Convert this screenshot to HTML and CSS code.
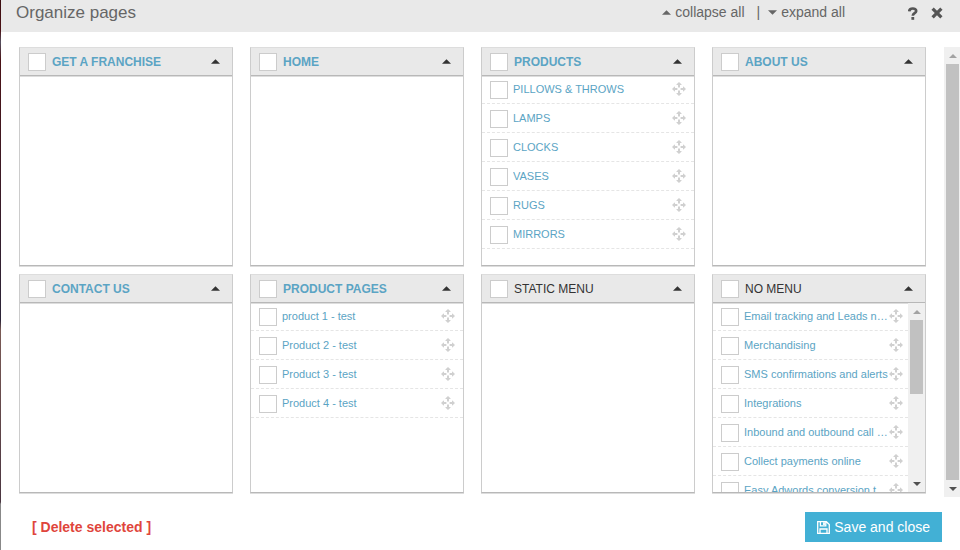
FILE: index.html
```html
<!DOCTYPE html>
<html lang="en">
<head>
  <meta charset="UTF-8">
  <title>Organize pages</title>
  <meta name="viewport" content="width=device-width, initial-scale=1.0">
  <link rel="stylesheet" href="styles.css">
</head>
<body>

  <!-- shared icons -->
  <svg class="sprite" aria-hidden="true">
    <symbol id="up" viewBox="0 0 10 5"><path d="M5 0 L10 5 H0 Z"/></symbol>
    <symbol id="down" viewBox="0 0 10 5"><path d="M0 0 H10 L5 5 Z"/></symbol>
    <symbol id="move" viewBox="0 0 14 14">
      <path d="M7 0 L9.6 2.6 V3 H8 V5.4 H6 V3 H4.4 V2.6 Z M7 14 L4.4 11.4 V11 H6 V8.6 H8 V11 H9.6 V11.4 Z M0 7 L2.6 4.4 H3 V6 H5.4 V8 H3 V9.6 H2.6 Z M14 7 L11.4 9.6 H11 V8 H8.6 V6 H11 V4.4 H11.4 Z"/>
    </symbol>
  </svg>

  <div class="modal">
    <header class="modal-header">
      <h1>Organize pages</h1>
      <div class="toggle-all">
        <button type="button" id="collapseAll"><svg class="caret"><use href="#up"/></svg>collapse all</button>
        <span class="divider">|</span>
        <button type="button" id="expandAll"><svg class="caret"><use href="#down"/></svg>expand all</button>
      </div>
      <div class="window-buttons">
        <button type="button" aria-label="Help">
          <svg width="10" height="13" viewBox="0 0 10 13"><path d="M1.2 4.4 C1.4 0.6 8.2 0.6 8.2 3.9 C8.2 6.3 4.8 6 4.8 8.8" fill="none" stroke="#555" stroke-width="2.7"/><rect x="3.4" y="10" width="2.8" height="2.8" fill="#555"/></svg>
        </button>
        <button type="button" aria-label="Close">
          <svg width="12" height="12" viewBox="0 0 12 12"><path d="M1.6 1.6 L10.4 10.4 M10.4 1.6 L1.6 10.4" stroke="#555" stroke-width="3.2"/></svg>
        </button>
      </div>
    </header>

    <main class="content">
      <div class="menus" id="menus"></div>
      <div class="scrollbar" aria-hidden="true">
        <svg class="arrow off"><use href="#up"/></svg>
        <div class="thumb"></div>
        <svg class="arrow"><use href="#down"/></svg>
      </div>
    </main>

    <footer class="modal-footer">
      <button type="button" class="delete">[ Delete selected ]</button>
      <button type="button" class="save">
        <svg width="13" height="13" viewBox="0 0 13 13" fill="none" stroke="#fff" stroke-width="1.3"><path d="M0.7 0.7 H9.4 L12.3 3.6 V12.3 H0.7 Z M3 12.3 V8 H10 V12.3 M3.4 0.7 V4.8 H8.8 V0.7"/><path d="M7 1.2 V4" stroke-width="1.8"/></svg>
        Save and close
      </button>
    </footer>
  </div>

  <script src="script.js"></script>
</body>
</html>
```
FILE: styles.css
```css
* {
  box-sizing: border-box;
}

body {
  margin: 0;
  font-family: "Liberation Sans", Arial, sans-serif;
  color: #666;
  background: linear-gradient(#3a0d10 0, #4a1014 30px, #55505f 42px, #4a1216 60px, #2b2438 320px, #7a5a55 330px, #4a3540 502px, #888 504px);
}

button {
  padding: 0;
  border: none;
  background: none;
  font: inherit;
  color: inherit;
  cursor: pointer;
}

svg {
  display: block;
  flex: none;
}

.sprite {
  position: absolute;
  width: 0;
  height: 0;
}

.modal {
  display: flex;
  flex-direction: column;
  height: 100vh;
  margin-left: 1px;
  background: #fff;
}

.modal-header {
  display: flex;
  align-items: flex-start;
  height: 32px;
  padding: 2px 17px 0 15px;
  background: #e9e9e9;
}

h1 {
  flex: 1;
  margin: 0;
  font-size: 17px;
  font-weight: normal;
  line-height: 21px;
}

.toggle-all {
  display: flex;
  gap: 12px;
  font-size: 14px;
  line-height: 21px;
}

.toggle-all button {
  display: flex;
  align-items: center;
  gap: 4px;
}

.caret {
  width: 9px;
  height: 5px;
  fill: currentColor;
}

.toggle-all .divider {
  margin-right: -4px;
}

.window-buttons {
  display: flex;
  align-items: center;
  gap: 13px;
  height: 22px;
  margin-left: 63px;
}

.content {
  display: flex;
  flex: 1;
  min-height: 0;
  margin-top: 15px;
}

.menus {
  display: grid;
  flex: 1;
  grid-template-columns: repeat(4, minmax(0, 1fr));
  gap: 8px 17px;
  align-content: start;
  padding: 0 18px;
  overflow: hidden;
}

.menu {
  border: 1px solid #ccc;
  border-top-color: #ddd;
  border-bottom-color: #b8b8b8;
  box-shadow: 0 1px #ddd;
}

.menu-header {
  display: flex;
  align-items: center;
  gap: 6px;
  height: 28px;
  padding: 0 12px 0 8px;
  background: #e9e9e9;
  border-bottom: 1px solid #b8b8b8;
  box-shadow: 0 1px #ddd;
  color: #333;
  font-size: 12px;
}

.menu-header .title {
  flex: 1;
}

a.title {
  color: #5ba4c4;
  font-weight: bold;
  text-decoration: none;
}

input[type="checkbox"] {
  appearance: none;
  flex: none;
  width: 18px;
  height: 18px;
  margin: 0;
  border: 1px solid #ccc;
  background: #fff;
}

input[type="checkbox"]:checked {
  background: #5ba4c4;
}

.menu-body {
  display: flex;
  height: 189px;
  overflow: hidden;
}

.menu.collapsed .menu-body {
  display: none;
}

.menu-body ul {
  flex: 1;
  min-width: 0;
  margin: 0;
  padding: 0;
  list-style: none;
}

.menu-body li {
  display: flex;
  align-items: flex-end;
  height: 29px;
  padding: 0 8px 4px;
  border-bottom: 1px dashed #e5e5e5;
}

.menu-body li:first-child {
  height: 28px;
}

.menu-body li a {
  flex: 1;
  margin-left: 5px;
  overflow: hidden;
  color: #5ba4c4;
  font-size: 11px;
  line-height: 20px;
  text-decoration: none;
  text-overflow: ellipsis;
  white-space: nowrap;
}

.menu-body.scroll li {
  padding-right: 5px;
}

.move {
  width: 14px;
  height: 14px;
  margin-bottom: 3px;
  fill: #d0d0d0;
}

.scrollbar {
  display: flex;
  flex: none;
  flex-direction: column;
  align-items: center;
  width: 17px;
  margin-right: -1px;
  background: #f0f0f0;
}

.menu-body .scrollbar {
  margin-right: 0;
}

.thumb {
  flex: 1;
  width: 13px;
  background: #c1c1c1;
}

.arrow {
  width: 8px;
  height: 4px;
  margin: 7px 0 6px;
  fill: #505050;
}

.arrow.off {
  fill: #a3a3a3;
}

.menu-body .thumb {
  flex: 0 0 39%;
  margin-bottom: auto;
}

.modal-footer {
  display: flex;
  align-items: center;
  justify-content: space-between;
  height: 53px;
  padding: 7px 18px 0 31px;
  font-size: 14px;
}

.delete {
  color: #e0453c;
  font-weight: bold;
}

.save {
  display: flex;
  align-items: center;
  gap: 4px;
  height: 30px;
  padding: 0 12px;
  background: #42b0d5;
  color: #fff;
}
```
FILE: script.js
```js
const menus = [
  { title: "GET A FRANCHISE", link: true, pages: [] },
  { title: "HOME", link: true, pages: [] },
  { title: "PRODUCTS", link: true, pages: ["PILLOWS & THROWS", "LAMPS", "CLOCKS", "VASES", "RUGS", "MIRRORS"] },
  { title: "ABOUT US", link: true, pages: [] },
  { title: "CONTACT US", link: true, pages: [] },
  { title: "PRODUCT PAGES", link: true, pages: ["product 1 - test", "Product 2 - test", "Product 3 - test", "Product 4 - test"] },
  { title: "STATIC MENU", pages: [] },
  {
    title: "NO MENU",
    scroll: true,
    pages: [
      "Email tracking and Leads notifications",
      "Merchandising",
      "SMS confirmations and alerts",
      "Integrations",
      "Inbound and outbound call tracking",
      "Collect payments online",
      "Easy Adwords conversion tracking"
    ]
  }
];

const scrollbar = `
  <div class="scrollbar" aria-hidden="true">
    <svg class="arrow off"><use href="#up"/></svg>
    <div class="thumb"></div>
    <svg class="arrow"><use href="#down"/></svg>
  </div>`;

function pageRow(page) {
  const name = page.replace("&", "&amp;");
  return `
    <li>
      <input type="checkbox" aria-label="${name}">
      <a href="#">${name}</a>
      <svg class="move"><use href="#move"/></svg>
    </li>`;
}

document.getElementById("menus").innerHTML = menus.map((menu, i) => `
  <section class="menu">
    <div class="menu-header">
      <input type="checkbox" id="menu${i}" aria-label="${menu.title}">
      ${menu.link ? `<a class="title" href="#">${menu.title}</a>` : `<label class="title" for="menu${i}">${menu.title}</label>`}
      <button type="button" class="toggle" aria-label="Toggle ${menu.title}"><svg class="caret"><use href="#up"/></svg></button>
    </div>
    <div class="menu-body ${menu.scroll ? "scroll" : ""}">
      <ul>${menu.pages.map(pageRow).join("")}</ul>
      ${menu.scroll ? scrollbar : ""}
    </div>
  </section>`).join("");

const sections = document.querySelectorAll(".menu");

sections.forEach(section => {
  section.querySelector(".toggle").addEventListener("click", () => section.classList.toggle("collapsed"));
});

document.getElementById("collapseAll").addEventListener("click", () => {
  sections.forEach(section => section.classList.add("collapsed"));
});

document.getElementById("expandAll").addEventListener("click", () => {
  sections.forEach(section => section.classList.remove("collapsed"));
});
```
